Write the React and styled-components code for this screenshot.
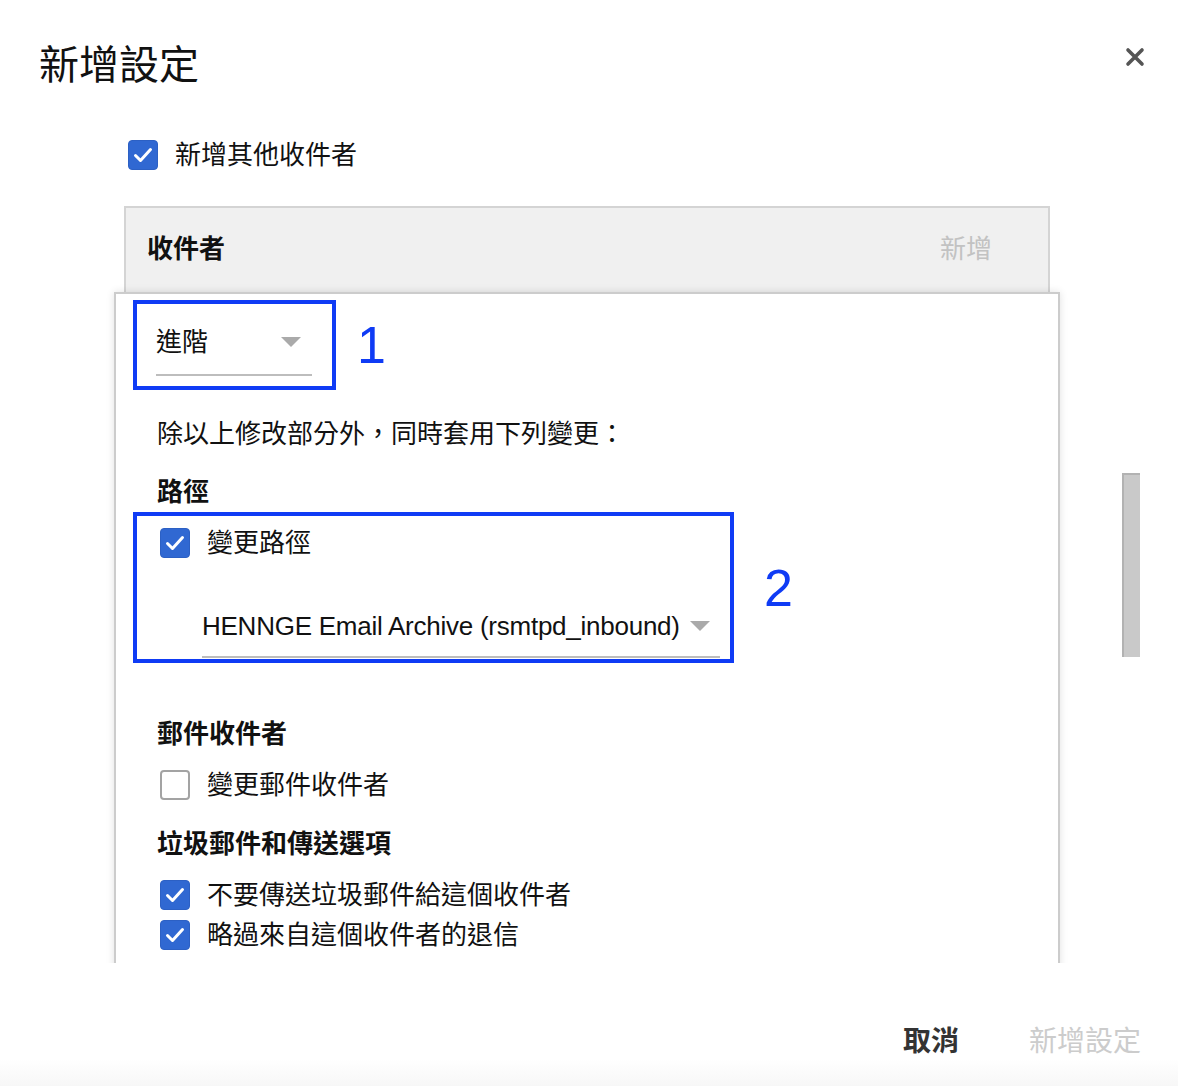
import styled, { createGlobalStyle } from 'styled-components';

const GlobalStyle = createGlobalStyle`
    html, body {
        margin: 0;
        padding: 0;
        background: #ffffff;
    }
    body {
        font-family: "Liberation Sans", "Noto Sans CJK TC", sans-serif;
        color: #111111;
    }
`;

const blue = '#0f3bf5';

const Dialog = styled.div`
    width: 1178px;
    height: 1086px;
    display: flex;
    flex-direction: column;
    overflow: hidden;
    background: #ffffff;
`;

const Header = styled.div`
    display: flex;
    justify-content: space-between;
    align-items: flex-start;
    padding: 42px 33px 0 39px;
    height: 46px;
    flex-shrink: 0;
`;

const Title = styled.h1`
    margin: 0;
    font-size: 40px;
    font-weight: 400;
    line-height: 46px;
    color: #111;
`;

const CloseButton = styled.button`
    margin-top: 5px;
    width: 20px;
    height: 20px;
    padding: 0;
    border: none;
    background: none;
    display: flex;
    align-items: center;
    justify-content: center;
`;

const Body = styled.div`
    display: flex;
    padding-left: 104px;
    flex-shrink: 0;
`;

const ScrollArea = styled.div`
    width: 966px;
    height: 875px;
    overflow: hidden;
`;

const ScrollTrack = styled.div`
    margin-left: 52px;
    width: 18px;
`;

const ScrollThumb = styled.div`
    margin-top: 385px;
    height: 184px;
    box-sizing: border-box;
    background: #c9c9c9;
    border-top: 2px solid #b2b2b2;
    border-left: 2px solid #b2b2b2;
`;

const CheckRow = styled.label`
    display: flex;
    align-items: center;
    gap: 17px;
    height: 30px;
    flex-shrink: 0;
    font-size: 26px;
    line-height: 30px;
    margin-top: ${({ $top }) => $top || 0}px;
    padding-left: ${({ $indent }) => $indent || 0}px;
`;

const Box = styled.span`
    width: 30px;
    height: 30px;
    box-sizing: border-box;
    border-radius: 4px;
    flex-shrink: 0;
    display: flex;
    align-items: center;
    justify-content: center;
    background: ${({ $checked }) => ($checked ? '#3068d2' : '#ffffff')};
    border: ${({ $checked }) =>
        $checked ? '1px solid #2c60c4' : '2px solid #a3a3a3'};
`;

const RecipientBar = styled.div`
    margin: 36px 20px 0;
    height: 86px;
    box-sizing: border-box;
    background: #f0f0f0;
    border: 2px solid #d4d4d4;
    border-bottom: none;
    display: flex;
    align-items: center;
    justify-content: space-between;
    padding: 0 56px 8px 21px;
    font-size: 26px;
`;

const BarTitle = styled.span`
    font-weight: 700;
`;

const BarAction = styled.span`
    color: #c2c2c2;
`;

const Panel = styled.div`
    margin: 0 10px;
    background: #ffffff;
    border: 2px solid #cccccc;
    border-bottom: none;
    box-shadow: 0 0 8px rgba(0, 0, 0, 0.12);
    padding: 6px 0 40px 17px;
    display: flex;
    flex-direction: column;
`;

const AnnotatedRow = styled.div`
    display: flex;
    align-items: center;
    margin-top: ${({ $top }) => $top || 0}px;
`;

const Highlight = styled.div`
    width: ${({ $width }) => $width}px;
    box-sizing: border-box;
    border: 4px solid ${blue};
    display: flex;
    flex-direction: column;
`;

const Marker = styled.span`
    margin-left: ${({ $gap }) => $gap}px;
    font-family: "Liberation Sans", sans-serif;
    font-size: 52px;
    line-height: 60px;
    color: ${blue};
`;

const Select = styled.div`
    display: flex;
    align-items: center;
    justify-content: space-between;
    width: ${({ $width }) => $width}px;
    height: 40px;
    padding-bottom: ${({ $pad }) => $pad}px;
    border-bottom: 2px solid #bdbdbd;
    margin: ${({ $margin }) => $margin};
    font-size: 26px;
    line-height: 40px;
    letter-spacing: ${({ $tight }) => ($tight ? '-0.25px' : '0')};
`;

const Caret = styled.span`
    width: 0;
    height: 0;
    flex-shrink: 0;
    border-left: 10px solid transparent;
    border-right: 10px solid transparent;
    border-top: 10px solid #aaaaaa;
    margin-right: ${({ $right }) => $right}px;
`;

const Text = styled.div`
    padding-left: 24px;
    margin-top: ${({ $top }) => $top || 0}px;
    font-size: 26px;
    line-height: 30px;
    font-weight: ${({ $bold }) => ($bold ? 700 : 400)};
`;

const Footer = styled.div`
    flex: 1;
    display: flex;
    justify-content: flex-end;
    align-items: flex-start;
    gap: 70px;
    padding: 62px 37px 0 0;
    background: linear-gradient(to bottom, #ffffff 0%, #ffffff 78%, #f7f7f7 100%);
`;

const FooterButton = styled.button`
    border: none;
    background: none;
    padding: 0;
    font-family: inherit;
    font-size: 28px;
    line-height: 34px;
    font-weight: ${({ $primary }) => ($primary ? 400 : 700)};
    color: ${({ $primary }) => ($primary ? '#cccccc' : '#333333')};
`;

function Check({ checked }) {
    return (
        <Box $checked={checked}>
            {checked && (
                <svg width="22" height="22" viewBox="0 0 22 22">
                    <polyline
                        points="3.5,11.5 8.5,16.5 18.5,5.5"
                        fill="none"
                        stroke="#ffffff"
                        strokeWidth="3"
                        strokeLinecap="round"
                        strokeLinejoin="round"
                    />
                </svg>
            )}
        </Box>
    );
}

function App() {
    return (
        <Dialog>
            <GlobalStyle />
            <Header>
                <Title>新增設定</Title>
                <CloseButton aria-label="close">
                    <svg width="20" height="20" viewBox="0 0 20 20">
                        <path
                            d="M3 3 L17 17 M17 3 L3 17"
                            stroke="#555555"
                            strokeWidth="3.6"
                            strokeLinecap="round"
                        />
                    </svg>
                </CloseButton>
            </Header>
            <Body>
                <ScrollArea>
                    <CheckRow $top={52} $indent={24}>
                        <Check checked />
                        新增其他收件者
                    </CheckRow>
                    <RecipientBar>
                        <BarTitle>收件者</BarTitle>
                        <BarAction>新增</BarAction>
                    </RecipientBar>
                    <Panel>
                        <AnnotatedRow>
                            <Highlight $width={203}>
                                <Select $width={156} $pad={12} $margin="18px 0 10px 19px">
                                    進階
                                    <Caret $right={11} />
                                </Select>
                            </Highlight>
                            <Marker $gap={21}>1</Marker>
                        </AnnotatedRow>
                        <Text $top={29}>除以上修改部分外，同時套用下列變更：</Text>
                        <Text $top={28} $bold>路徑</Text>
                        <AnnotatedRow $top={5}>
                            <Highlight $width={601}>
                                <CheckRow $top={12} $indent={23}>
                                    <Check checked />
                                    變更路徑
                                </CheckRow>
                                <Select $width={518} $pad={10} $margin="48px 0 1px 65px" $tight>
                                    HENNGE Email Archive (rsmtpd_inbound)
                                    <Caret $right={10} />
                                </Select>
                            </Highlight>
                            <Marker $gap={30}>2</Marker>
                        </AnnotatedRow>
                        <Text $top={56} $bold>郵件收件者</Text>
                        <CheckRow $top={21} $indent={27}>
                            <Check />
                            變更郵件收件者
                        </CheckRow>
                        <Text $top={29} $bold>垃圾郵件和傳送選項</Text>
                        <CheckRow $top={21} $indent={27}>
                            <Check checked />
                            不要傳送垃圾郵件給這個收件者
                        </CheckRow>
                        <CheckRow $top={10} $indent={27}>
                            <Check checked />
                            略過來自這個收件者的退信
                        </CheckRow>
                    </Panel>
                </ScrollArea>
                <ScrollTrack>
                    <ScrollThumb />
                </ScrollTrack>
            </Body>
            <Footer>
                <FooterButton>取消</FooterButton>
                <FooterButton $primary>新增設定</FooterButton>
            </Footer>
        </Dialog>
    );
}

export default App;
